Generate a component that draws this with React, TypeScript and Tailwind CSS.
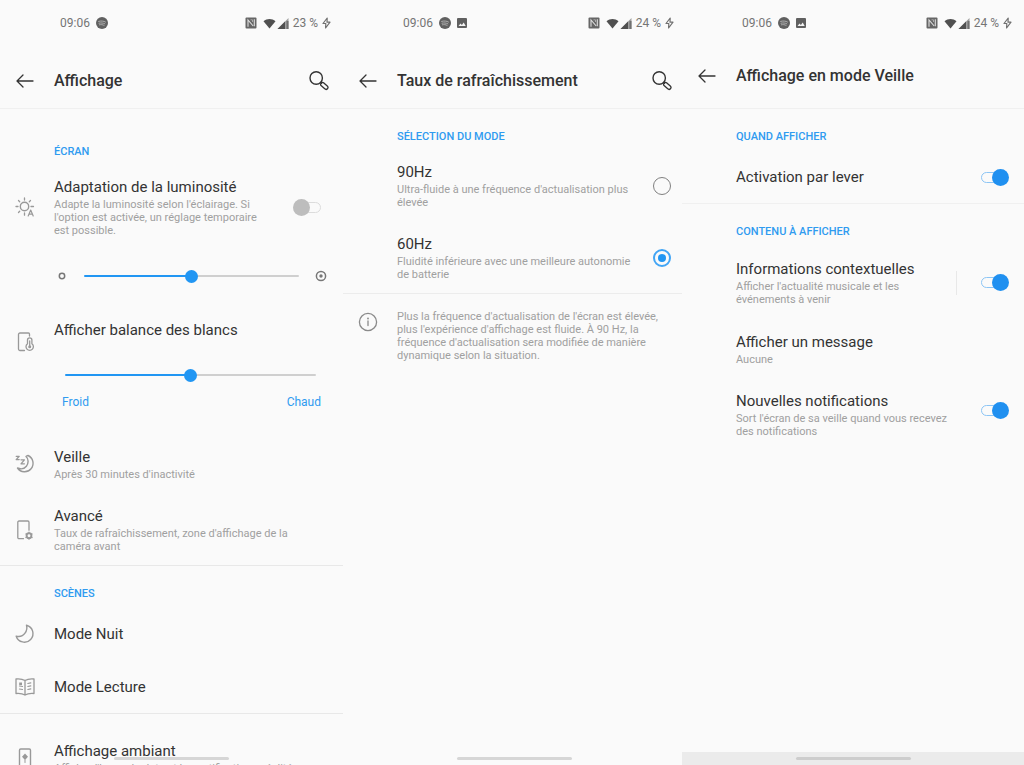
import { useState } from "react";
import type { ReactNode } from "react";

const stroke = {
  fill: "none",
  stroke: "currentColor",
  strokeLinecap: "round" as const,
  strokeLinejoin: "round" as const,
};

function SpotifyIcon() {
  return (
    <svg viewBox="0 0 12 12" className="size-3" aria-hidden="true">
      <circle cx="6" cy="6" r="6" fill="#606060" />
      <path d="M2.6 4.4c2.4-.7 5-.5 6.9.6M3 6.2c2-.5 4.2-.3 5.8.6M3.4 7.8c1.7-.4 3.3-.2 4.7.6" fill="none" stroke="#b4b4b4" strokeWidth=".9" strokeLinecap="round" />
    </svg>
  );
}

function PictureIcon() {
  return (
    <svg viewBox="0 0 10 10" className="size-2.5" aria-hidden="true">
      <rect width="10" height="10" rx="1" fill="#606060" />
      <path d="M1.5 8l2-2.6 1.4 1.6 1.8-2.5L8.7 8z" fill="#f4f4f4" />
    </svg>
  );
}

function NfcIcon() {
  return (
    <svg viewBox="0 0 12 12" className="size-3" aria-hidden="true">
      <rect x=".5" y=".5" width="11" height="11" rx="1" fill="#666" />
      <path d="M3 9.800V3l5.200 6" fill="none" stroke="#dedede" strokeWidth="1.100" />
      <path d="M9.300 2.200v7" fill="none" stroke="#dedede" strokeWidth="1.100" />
      <path d="M5.500 2.800h2v2.200" fill="none" stroke="#bdbdbd" strokeWidth=".8" />
    </svg>
  );
}

function WifiIcon() {
  return (
    <svg viewBox="0 0 13 11" className="h-[11px] w-[13px]" aria-hidden="true">
      <path d="M6.5 10.5L.5 3.300C4 .3 9 .3 12.500 3.300z" fill="#505050" />
    </svg>
  );
}

function SignalIcon() {
  return (
    <svg viewBox="0 0 12 11" className="h-[11px] w-3" aria-hidden="true">
      <path d="M.5 11L11.500 0v11z" fill="#a0a0a0" />
      <path d="M.5 11L8 3.500V11z" fill="#505050" />
      <path d="M9.500 3h2v8h-2z" fill="#707070" />
    </svg>
  );
}

function BoltIcon() {
  return (
    <svg viewBox="0 0 9 12" className="h-3 w-[9px]" aria-hidden="true">
      <path d="M5.200 1L1 6.500h2.800L3.600 11 8 5.200H5z" {...stroke} stroke="#707070" strokeWidth="1.200" />
    </svg>
  );
}

function BackIcon() {
  return (
    <svg viewBox="0 0 18 14" className="h-3.5 w-[18px]" aria-hidden="true">
      <path d="M17 7H1.200M7 1L1 7l6 6" {...stroke} strokeWidth="1.300" />
    </svg>
  );
}

function SearchIcon() {
  return (
    <svg viewBox="0 0 20 20" className="size-5" aria-hidden="true">
      <circle cx="7.200" cy="7" r="6.200" {...stroke} strokeWidth="1.400" />
      <path d="M11.600 11.400l1 .9" {...stroke} strokeWidth="1.400" />
      <rect x="11.100" y="13" width="8.400" height="3.800" rx="1.900" transform="rotate(42 15.300 14.900)" {...stroke} strokeWidth="1.300" />
    </svg>
  );
}

function AutoBrightnessIcon() {
  return (
    <svg viewBox="0 0 20 20" className="size-5" aria-hidden="true">
      <circle cx="9.500" cy="9.500" r="4.200" {...stroke} strokeWidth="1.400" />
      <path d="M9.500 1v2M9.500 16v2.200M1 9.500h2M16 9.500h2.500M3.500 3.500l1.200 1.200M14.300 4.700l1.200-1.200M3.500 15.500l1.200-1.200" {...stroke} strokeWidth="1.300" />
      <path d="M13.200 19l2.500-6 2.500 6M14 17.200h3.400" {...stroke} strokeWidth="1.200" />
    </svg>
  );
}

function WhiteBalanceIcon() {
  return (
    <svg viewBox="0 0 20 20" className="size-5" aria-hidden="true">
      <path d="M8.500 18.500H4A1.500 1.500 0 0 1 2.500 17V2.500A1.500 1.500 0 0 1 4 1h8.500a1 1 0 0 1 1 1v2" {...stroke} strokeWidth="1.300" />
      <path d="M11.500 11.700V8a2.200 2.200 0 0 1 4.400 0v3.700a3.700 3.700 0 1 1-4.400 0z" {...stroke} strokeWidth="1.300" />
      <path d="M13.700 9v6" {...stroke} strokeWidth="1.300" />
      <circle cx="13.700" cy="14.700" r="1.500" fill="currentColor" />
    </svg>
  );
}

function SleepIcon() {
  return (
    <svg viewBox="0 0 20 20" className="size-5" aria-hidden="true">
      <path d="M13 1.500a8.500 8.500 0 1 1-10.500 12.500c3 1.300 6.800.8 8.900-1.800S14 5 11 2.500c.5-.5 1.300-.9 2-1z" {...stroke} strokeWidth="1.400" />
      <path d="M1.200 2.300h3L1.200 5.600h3M6 5.800h3.400L6 9.800h3.400" {...stroke} strokeWidth="1.300" />
    </svg>
  );
}

function AdvancedIcon() {
  return (
    <svg viewBox="0 0 20 20" className="size-5" aria-hidden="true">
      <path d="M8.500 18.700H4a1.200 1.200 0 0 1-1.200-1.200V2.200A1.200 1.200 0 0 1 4 1h8.800A1.200 1.200 0 0 1 14 2.200v8" {...stroke} strokeWidth="1.300" />
      <circle cx="14" cy="15.700" r="2.400" {...stroke} strokeWidth="1.900" />
      <path d="M14 12.100v.4M14 18.900v.4M10.900 13.900l.4.200M16.700 17.300l.4.200M10.900 17.500l.4-.2M16.700 14.100l.4-.2" {...stroke} strokeWidth="1.200" />
    </svg>
  );
}

function MoonIcon() {
  return (
    <svg viewBox="0 0 20 20" className="size-5" aria-hidden="true">
      <path d="M11.500 1.200a8.600 8.600 0 1 1-10.300 11c3.500.8 7-.4 8.800-3 1.800-2.500 2.300-5.300 1.500-8z" {...stroke} strokeWidth="1.400" />
    </svg>
  );
}

function BookIcon() {
  return (
    <svg viewBox="0 0 20 20" className="size-5" aria-hidden="true">
      <path d="M10 3.500C7.500 2 4.500 1.700 1 2v14.500c3.500-.3 6.500 0 9 1.500 2.500-1.500 5.500-1.800 9-1.500V2c-3.500-.3-6.500 0-9 1.500zM10 3.500V18" {...stroke} strokeWidth="1.300" />
      <path d="M12.800 6.500l3-.6M12.800 9.500l3-.6M12.800 12.500l3-.6M4.500 12l3 .5M4.500 9l3 .5" {...stroke} strokeWidth="1.200" />
      <rect x="4.200" y="5.500" width="2.800" height="2.600" fill="currentColor" />
    </svg>
  );
}

function AmbientIcon() {
  return (
    <svg viewBox="0 0 20 20" className="size-5" aria-hidden="true">
      <rect x="4.500" y="1" width="11" height="18.500" rx="1.200" {...stroke} strokeWidth="1.400" />
      <path d="M10 5.500l3 3.300-3 3.200-3-3.200z" fill="currentColor" />
      <path d="M10 12v2.500" {...stroke} strokeWidth="1" />
    </svg>
  );
}

function InfoIcon() {
  return (
    <svg viewBox="0 0 20 20" className="size-5" aria-hidden="true">
      <circle cx="10" cy="10" r="8.600" {...stroke} strokeWidth="1.300" />
      <path d="M10 9v4.500" {...stroke} strokeWidth="1.300" />
      <circle cx="10" cy="6.500" r=".9" fill="currentColor" />
    </svg>
  );
}

function DimIcon() {
  return (
    <svg viewBox="0 0 8 8" className="size-2" aria-hidden="true">
      <circle cx="4" cy="4" r="2.700" {...stroke} strokeWidth="1.500" />
    </svg>
  );
}

function BrightIcon() {
  return (
    <svg viewBox="0 0 12 12" className="size-3" aria-hidden="true">
      <circle cx="6" cy="6" r="4.600" {...stroke} strokeWidth="1.500" />
      <circle cx="6" cy="6" r="1.700" fill="currentColor" />
    </svg>
  );
}

function StatusBar({ battery, picture = false }: { battery: string; picture?: boolean }) {
  return (
    <div className="flex h-[46px] items-center pr-3 pl-[60px] text-xs text-[#757575]">
      <span className="mr-1.5">09:06</span>
      <SpotifyIcon />
      {picture && <span className="ml-1.5"><PictureIcon /></span>}
      <span className="ml-auto flex items-center">
        <NfcIcon />
        <span className="ml-1.5"><WifiIcon /></span>
        <span className="ml-px"><SignalIcon /></span>
        <span className="mx-1">{battery}</span>
        <BoltIcon />
      </span>
    </div>
  );
}

function Header({ title, search = true }: { title: string; search?: boolean }) {
  return (
    <header className={`flex h-[63px] items-center border-b border-[#f0f0f0] pr-3.5 pl-4 text-[#333] ${search ? "pt-2" : "pb-0.5"}`}>
      <button type="button" aria-label="Retour" className="mr-5"><BackIcon /></button>
      <h1 className="flex-1 text-base font-medium whitespace-nowrap">{title}</h1>
      {search && <button type="button" aria-label="Rechercher"><SearchIcon /></button>}
    </header>
  );
}

function SectionTitle({ children }: { children: ReactNode }) {
  return <h2 className="pl-[54px] text-[11px] leading-4 font-medium text-[#2f9bf0]">{children}</h2>;
}

function Row({ icon, title, text, control, htmlFor }: { icon?: ReactNode; title: string; text?: string; control?: ReactNode; htmlFor?: string }) {
  return (
    <div className="flex items-center">
      <div className="flex w-[54px] shrink-0 pl-[15px] text-[#999]">{icon}</div>
      <div className="min-w-0 flex-1">
        {htmlFor ? (
          <label htmlFor={htmlFor} className="block text-[15px] leading-5 text-[#333]">{title}</label>
        ) : (
          <h3 className="text-[15px] leading-5 text-[#333]">{title}</h3>
        )}
        {text && <p className="pt-px text-[11px] leading-[13px] text-[#a0a0a0]">{text}</p>}
      </div>
      {control}
    </div>
  );
}

function Toggle({ id, initial = false }: { id: string; initial?: boolean }) {
  const [on, setOn] = useState(initial);
  return (
    <input
      id={id}
      type="checkbox"
      role="switch"
      checked={on}
      onChange={() => setOn(!on)}
      className="relative h-[17px] w-7 shrink-0 appearance-none before:absolute before:top-[3px] before:right-0 before:h-[11px] before:w-5 before:rounded-full before:border before:border-[#dcdcdc] after:absolute after:top-0 after:left-0 after:size-[17px] after:rounded-full after:bg-[#bdbdbd] checked:before:right-2 checked:before:border-[#8cc5f5] checked:after:left-[11px] checked:after:bg-[#2090f0]"
    />
  );
}

function Slider({ label, initial }: { label: string; initial: number }) {
  const [value, setValue] = useState(initial);
  return (
    <input
      type="range"
      aria-label={label}
      value={value}
      onChange={(e) => setValue(Number(e.target.value))}
      style={{ backgroundImage: `linear-gradient(to right, #2196f3 ${value}%, #cfcfcf ${value}%)` }}
      className="block h-0.5 w-full min-w-0 flex-1 appearance-none rounded-full [&::-webkit-slider-thumb]:size-[13px] [&::-webkit-slider-thumb]:appearance-none [&::-webkit-slider-thumb]:rounded-full [&::-webkit-slider-thumb]:bg-[#2196f3]"
    />
  );
}

function Phone({ children, tray = false, tucked = false }: { children: ReactNode; tray?: boolean; tucked?: boolean }) {
  return (
    <section className={`relative h-full min-w-0 overflow-hidden bg-[#fafafa] ${tucked ? "-mr-1" : ""}`}>
      {children}
      <div className={`absolute inset-x-0 bottom-0 flex h-[13px] justify-center pt-[5px] ${tray ? "bg-[#ebebeb]" : ""}`}>
        <div className={`h-[3px] w-[115px] rounded-full ${tray ? "bg-[#cdcdcd]" : "bg-[#d6d6d6]"}`} />
      </div>
    </section>
  );
}

function DisplayScreen() {
  return (
    <Phone>
      <StatusBar battery="23 %" />
      <Header title="Affichage" />
      <div className="pt-[35px]">
        <SectionTitle>ÉCRAN</SectionTitle>
        <div className="pt-[17px] pr-[22px]">
          <Row icon={<AutoBrightnessIcon />} title="Adaptation de la luminosité" text="Adapte la luminosité selon l'éclairage. Si l'option est activée, un réglage temporaire est possible." htmlFor="auto-brightness" control={<div className="flex pl-6"><Toggle id="auto-brightness" /></div>} />
        </div>
        <div className="mt-[33px] flex h-3 items-center pr-4 pl-[58px] text-[#777]">
          <DimIcon />
          <div className="flex flex-1 pr-4 pl-[18px]"><Slider label="Luminosité" initial={50} /></div>
          <BrightIcon />
        </div>
        <div className="flex pt-[38px]">
          <div className="w-[54px] shrink-0 pt-3 pl-4 text-[#999]"><WhiteBalanceIcon /></div>
          <h3 className="text-[15px] leading-5 text-[#333]">Afficher balance des blancs</h3>
        </div>
        <div className="pt-[22px] pr-[27px] pl-[65px]"><Slider label="Balance des blancs" initial={50} /></div>
        <div className="flex justify-between pt-[18px] pr-[22px] pl-[62px] text-xs text-[#2f9bf0]">
          <span>Froid</span>
          <span>Chaud</span>
        </div>
        <div className="pt-[37px] pr-11"><Row icon={<SleepIcon />} title="Veille" text="Après 30 minutes d'inactivité" /></div>
        <div className="border-b border-[#e8e8e8] pt-[25px] pr-11 pb-3"><Row icon={<AdvancedIcon />} title="Avancé" text="Taux de rafraîchissement, zone d'affichage de la caméra avant" /></div>
        <div className="pt-5"><SectionTitle>SCÈNES</SectionTitle></div>
        <div className="pt-[22px]"><Row icon={<MoonIcon />} title="Mode Nuit" /></div>
        <div className="border-b border-[#e8e8e8] pt-[33px] pb-4"><Row icon={<BookIcon />} title="Mode Lecture" /></div>
        <div className="pt-[27px] pr-11"><Row icon={<AmbientIcon />} title="Affichage ambiant" text="Afficher l'heure, la date et les notifications, réalité" /></div>
      </div>
    </Phone>
  );
}

function RefreshOption({ id, title, text, checked, onSelect }: { id: string; title: string; text: string; checked: boolean; onSelect: () => void }) {
  return (
    <Row
      title={title}
      text={text}
      htmlFor={id}
      control={
        <div className="flex pl-4">
          <input
            id={id}
            type="radio"
            name="refresh-rate"
            checked={checked}
            onChange={onSelect}
            className="grid size-[18px] shrink-0 appearance-none place-items-center rounded-full border border-[#808080] before:size-2 before:rounded-full checked:border-2 checked:border-[#42a5f5] checked:before:bg-[#2196f3]"
          />
        </div>
      }
    />
  );
}

function RefreshScreen() {
  const [rate, setRate] = useState(60);
  return (
    <Phone tucked>
      <StatusBar battery="24 %" picture />
      <Header title="Taux de rafraîchissement" />
      <div className="pt-5">
        <SectionTitle>SÉLECTION DU MODE</SectionTitle>
        <div className="flex flex-col gap-[25px] border-b border-[#ececec] pt-[17px] pr-[15px] pb-3">
          <RefreshOption id="rate-90" title="90Hz" text="Ultra-fluide à une fréquence d'actualisation plus élevée" checked={rate === 90} onSelect={() => setRate(90)} />
          <RefreshOption id="rate-60" title="60Hz" text="Fluidité inférieure avec une meilleure autonomie de batterie" checked={rate === 60} onSelect={() => setRate(60)} />
        </div>
        <div className="flex pt-4">
          <div className="w-[54px] shrink-0 pt-0.5 pl-[15px] text-[#8a8a8a]"><InfoIcon /></div>
          <p className="flex-1 pr-4 text-[11px] leading-[13px] text-[#a0a0a0]">Plus la fréquence d'actualisation de l'écran est élevée, plus l'expérience d'affichage est fluide. À 90 Hz, la fréquence d'actualisation sera modifiée de manière dynamique selon la situation.</p>
        </div>
      </div>
    </Phone>
  );
}

function AmbientScreen() {
  return (
    <Phone tray>
      <StatusBar battery="24 %" picture />
      <Header title="Affichage en mode Veille" search={false} />
      <div className="pt-5">
        <SectionTitle>QUAND AFFICHER</SectionTitle>
        <div className="border-b border-[#f0f0f0] pt-[22px] pr-[15px] pb-4">
          <Row title="Activation par lever" htmlFor="lift" control={<Toggle id="lift" initial />} />
        </div>
        <div className="pt-5"><SectionTitle>CONTENU À AFFICHER</SectionTitle></div>
        <div className="flex flex-col pt-[19px] pr-[15px]">
          <Row title="Informations contextuelles" text="Afficher l'actualité musicale et les événements à venir" htmlFor="context" control={<div className="ml-8 flex h-6 items-center border-l border-[#e8e8e8] pl-6"><Toggle id="context" initial /></div>} />
          <div className="pt-[26px]"><Row title="Afficher un message" text="Aucune" /></div>
          <div className="pt-[25px]"><Row title="Nouvelles notifications" text="Sort l'écran de sa veille quand vous recevez des notifications" htmlFor="notifications" control={<div className="flex pb-2 pl-6"><Toggle id="notifications" initial /></div>} /></div>
        </div>
      </div>
    </Phone>
  );
}

export default function App() {
  return (
    <main className="grid h-screen grid-cols-[343fr_339fr_342fr] overflow-hidden bg-[#fafafa] font-[Roboto,sans-serif]">
      <DisplayScreen />
      <RefreshScreen />
      <AmbientScreen />
    </main>
  );
}
